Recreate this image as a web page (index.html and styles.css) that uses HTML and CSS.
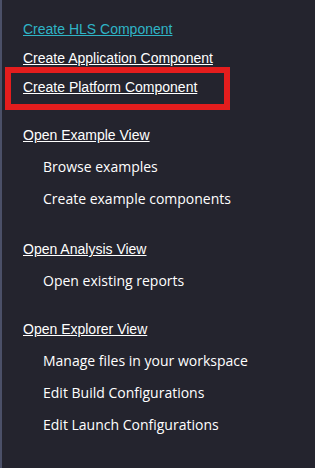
FILE: index.html
```html
<!DOCTYPE html>
<html lang="en">
<head>
    <meta charset="UTF-8">
    <meta name="viewport" content="width=device-width, initial-scale=1.0">
    <title>Welcome</title>
    <link rel="stylesheet" href="styles.css">
</head>
<body>
    <div class="panel">
        <div class="create-group">
            <a class="create-link hls" href="#">Create HLS Component</a>
            <a class="create-link" href="#">Create Application Component</a>
            <div class="highlight">
                <a class="create-link" href="#">Create Platform Component</a>
            </div>
        </div>

        <div class="section first">
            <a class="view-link" href="#">Open Example View</a>
            <div class="sub-item">Browse examples</div>
            <div class="sub-item">Create example components</div>
        </div>

        <div class="section">
            <a class="view-link" href="#">Open Analysis View</a>
            <div class="sub-item">Open existing reports</div>
        </div>

        <div class="section last">
            <a class="view-link" href="#">Open Explorer View</a>
            <div class="sub-item">Manage files in your workspace</div>
            <div class="sub-item">Edit Build Configurations</div>
            <div class="sub-item">Edit Launch Configurations</div>
        </div>
    </div>
</body>
</html>
```

FILE: styles.css
```css
body {
    margin: 0;
    background-color: #24242e;
    color: #ffffff;
}
.panel {
    height: 468px;
    box-sizing: border-box;
    border-left: 2px solid #4b5068;
    padding: 15px 0 0 21px;
}
.create-group {
    display: flex;
    flex-direction: column;
    align-items: flex-start;
}
.create-link {
    font-family: "Liberation Sans", Arial, sans-serif;
    font-size: 14px;
    line-height: 29px;
    color: #ffffff;
    text-decoration: underline;
}
.create-link.hls {
    color: #2fb4c6;
}
.highlight {
    margin: -6px 0 0 -18px;
    width: 201px;
    padding: 0 0 2px 12px;
    border: 6px solid #e41d1d;
}
.section {
    margin-top: 18px;
    display: flex;
    flex-direction: column;
    align-items: flex-start;
}
.section.first {
    margin-top: 9px;
}
.section.last {
    margin-top: 16px;
}
.view-link {
    font-family: "Liberation Sans", Arial, sans-serif;
    font-size: 14px;
    line-height: 32px;
    color: #ffffff;
    text-decoration: underline;
}
.sub-item {
    font-family: "Open Sans", sans-serif;
    font-size: 14px;
    line-height: 32px;
    padding-left: 20px;
}
```
